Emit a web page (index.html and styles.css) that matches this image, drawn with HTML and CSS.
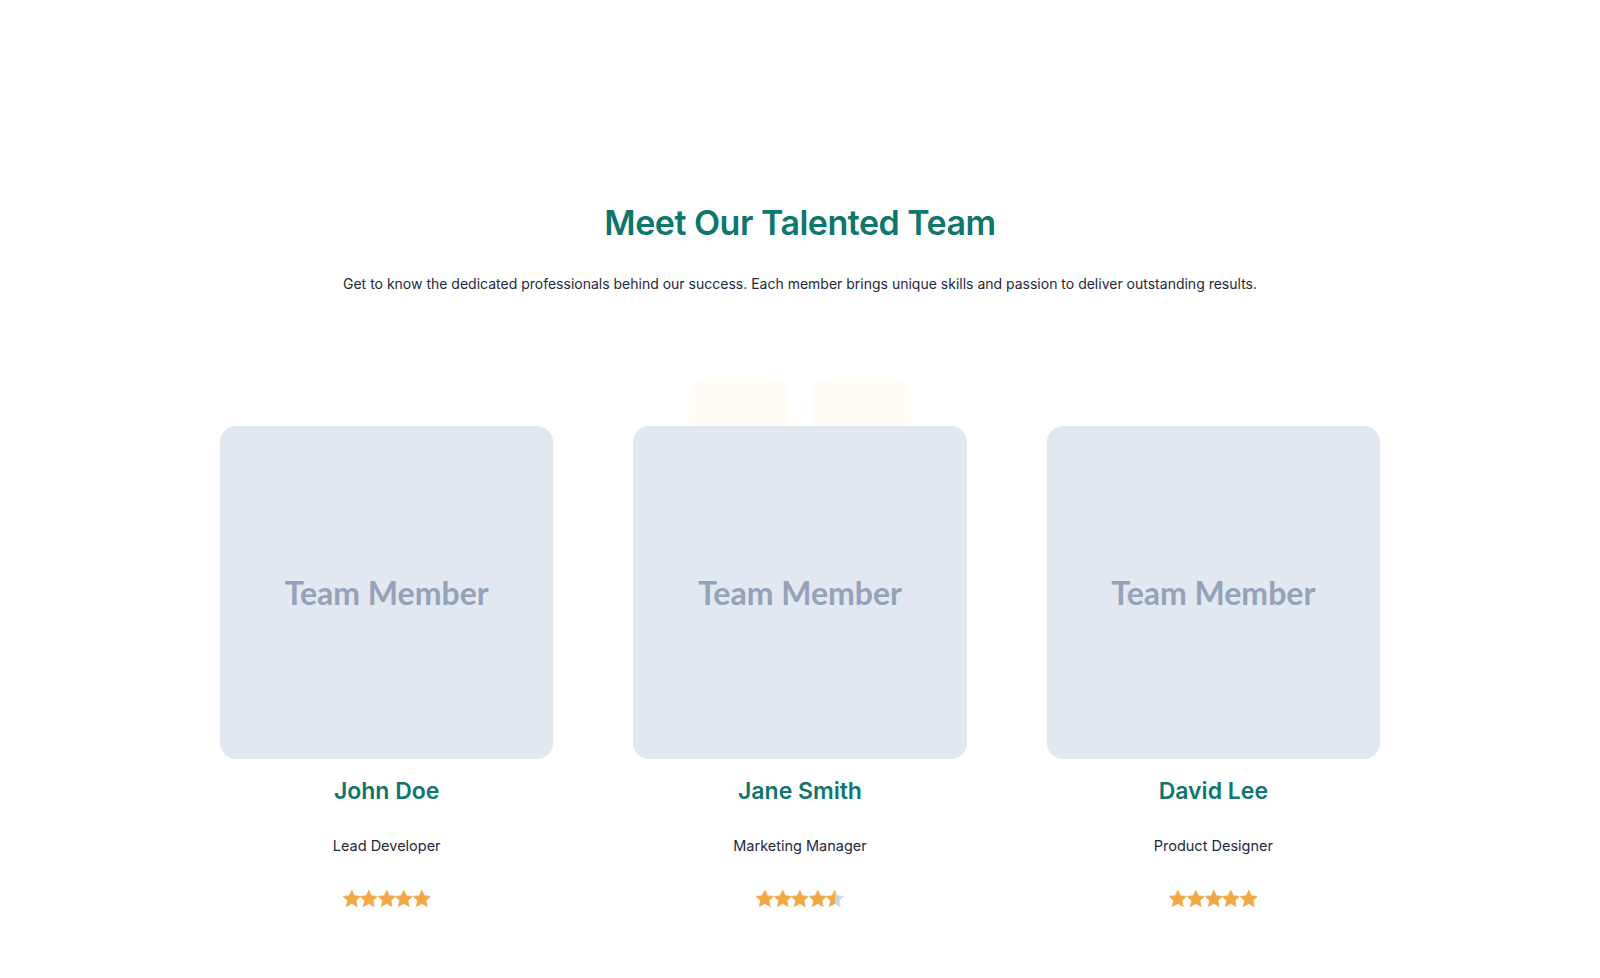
FILE: index.html
```html
<!DOCTYPE html>
<html lang="en">
<head>
    <meta charset="UTF-8">
    <meta name="viewport" content="width=device-width, initial-scale=1.0">
    <title>Our Team</title>
    <link rel="stylesheet" href="styles.css">
</head>
<body>

    <section class="team">
        <h2 class="team-title">Meet Our Talented Team</h2>
        <p class="team-intro">Get to know the dedicated professionals behind our success. Each member brings unique skills and passion to deliver outstanding results.</p>

        <div class="team-grid">
            <!-- soft tabs peeking out behind the middle card -->
            <span class="tab tab-left"></span>
            <span class="tab tab-right"></span>

            <div class="member">
                <div class="photo">Team Member</div>
                <h3 class="name">John Doe</h3>
                <p class="role">Lead Developer</p>
                <div class="stars" data-rating="5"></div>
            </div>

            <div class="member">
                <div class="photo">Team Member</div>
                <h3 class="name">Jane Smith</h3>
                <p class="role">Marketing Manager</p>
                <div class="stars" data-rating="4.5"></div>
            </div>

            <div class="member">
                <div class="photo">Team Member</div>
                <h3 class="name">David Lee</h3>
                <p class="role">Product Designer</p>
                <div class="stars" data-rating="5"></div>
            </div>
        </div>
    </section>

    <script>
        const starPath = "M12 2.2l2.95 6.3 6.9.75-5.15 4.7 1.45 6.85L12 17.3l-6.15 3.5 1.45-6.85-5.15-4.7 6.9-.75z";

        function starSvg(fill, id) {
            // fill: 1 = full, 0.5 = half, 0 = empty
            const grad = `<defs><linearGradient id="g${id}"><stop offset="${fill * 100}%" stop-color="#f0a944"/><stop offset="${fill * 100}%" stop-color="#cbd5e1"/></linearGradient></defs>`;
            return `<svg viewBox="2 2 20 20" width="17.6" height="17.6">${grad}<path d="${starPath}" fill="url(#g${id})" stroke="url(#g${id})" stroke-width="0.8" stroke-linejoin="round"/></svg>`;
        }

        let n = 0;
        document.querySelectorAll(".stars").forEach(box => {
            const rating = parseFloat(box.dataset.rating);
            let html = "";
            for (let i = 1; i <= 5; i++) {
                const fill = Math.max(0, Math.min(1, rating - i + 1));
                html += starSvg(fill, n++);
            }
            box.innerHTML = html;
        });
    </script>

</body>
</html>
```

FILE: styles.css
```css
body {
    margin: 0;
    font-family: 'Inter', 'Noto Sans', sans-serif;
    background: #ffffff;
    color: #1e293b;
}
.team {
    max-width: 1160px;
    margin: 0 auto;
    padding: 202px 20px 60px;
    text-align: center;
}
.team-title {
    margin: 0;
    font-size: 34px;
    font-weight: 600;
    letter-spacing: -0.5px;
    color: #0f766e;
}
.team-intro {
    margin: 32px 0 0;
    font-size: 14px;
    color: #1e293b;
}
.team-grid {
    position: relative;
    display: grid;
    grid-template-columns: repeat(3, 1fr);
    gap: 80px;
    margin-top: 134px;
}
.tab {
    position: absolute;
    top: -49px;
    width: 100px;
    height: 120px;
    border-radius: 22px;
    background: #fefcf4;
}
.tab-left { left: calc(50% - 111px); }
.tab-right { left: calc(50% + 11px); }
.member {
    position: relative;
}
.photo {
    aspect-ratio: 1 / 1;
    display: flex;
    align-items: center;
    justify-content: center;
    background: #e2e8f0;
    border-radius: 16px;
    font-family: 'Lato', sans-serif;
    font-weight: 700;
    font-size: 32px;
    color: #94a3b8;
}
.name {
    margin: 18px 0 0;
    font-size: 23px;
    font-weight: 600;
    color: #0f766e;
}
.role {
    margin: 32px 0 0;
    font-size: 14.5px;
    color: #1e293b;
}
.stars {
    display: flex;
    justify-content: center;
    margin-top: 36px;
}
.stars svg { display: block; }
```
